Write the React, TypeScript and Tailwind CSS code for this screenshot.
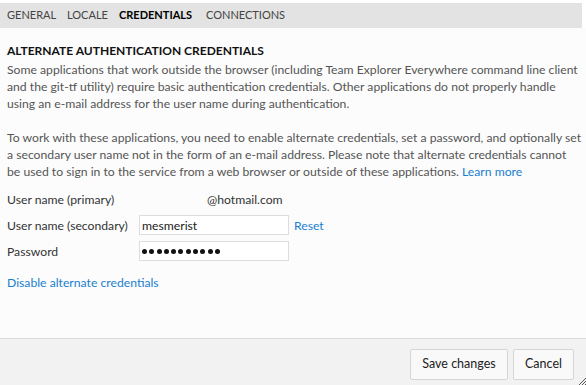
import React from "react";

export default function App() {
  const font = { fontFamily: 'Lato, "Open Sans", sans-serif' };
  const dots = Array.from({ length: 11 });
  return (
    <div className="w-[586px] h-[385px] bg-white flex flex-col overflow-hidden relative" style={font}>
      <div className="pt-[3px] w-[582px]">
        <div className="h-[25px] bg-[#e3e3e3] flex items-center pl-[7px] text-[11px] text-[#444] whitespace-nowrap">
          <span className="w-[60px]">GENERAL</span>
          <span className="w-[52px]">LOCALE</span>
          <span className="w-[87px] font-bold text-black">CREDENTIALS</span>
          <span>CONNECTIONS</span>
        </div>
      </div>
      <div className="flex-1 bg-[#fcfcfc] px-[7px] pt-[15px] text-[12.2px] leading-[17px] text-[#555] whitespace-nowrap">
        <div className="font-bold text-[12px] text-[#111] leading-[16px]">ALTERNATE AUTHENTICATION CREDENTIALS</div>
        <p className="mt-[2px]">
          Some applications that work outside the browser (including Team Explorer Everywhere command line client
          <br />
          and the git-tf utility) require basic authentication credentials. Other applications do not properly handle
          <br />
          using an e-mail address for the user name during authentication.
        </p>
        <p className="mt-[17px]">
          To work with these applications, you need to enable alternate credentials, set a password, and optionally set
          <br />
          a secondary user name not in the form of an e-mail address. Please note that alternate credentials cannot
          <br />
          be used to sign in to the service from a web browser or outside of these applications.{" "}
          <span className="text-[#1a7fd0]">Learn more</span>
        </p>
        <div className="mt-[9px] flex flex-col gap-[6px] text-[#333]">
          <div className="flex items-center h-[20px]">
            <span className="w-[132px]">User name (primary)</span>
            <span className="ml-[68px]">@hotmail.com</span>
          </div>
          <div className="flex items-center h-[20px]">
            <span className="w-[132px]">User name (secondary)</span>
            <div className="w-[150px] h-[20px] border border-[#ddd] bg-white flex items-center px-[2px] text-[#222]">mesmerist</div>
            <span className="ml-[5px] text-[#1a7fd0]">Reset</span>
          </div>
          <div className="flex items-center h-[20px]">
            <span className="w-[132px]">Password</span>
            <div className="w-[150px] h-[20px] border border-[#ddd] bg-white flex items-center px-[2px] gap-[2.3px]">
              {dots.map((_, i) => (
                <span key={i} className="w-[5px] h-[5px] rounded-full bg-[#111]" />
              ))}
            </div>
          </div>
        </div>
        <div className="mt-[13px] text-[#1a7fd0]">Disable alternate credentials</div>
      </div>
      <div className="h-[47px] border-t border-[#dadada] bg-[#f2f2f2] flex justify-end items-start pt-[10px] pr-[12px] gap-[5px] text-[12.5px] text-[#222]">
        <button className="h-[31px] w-[98px] border border-[#d5d5d5] bg-[#f9f9f9] rounded-[2px]">Save changes</button>
        <button className="h-[31px] w-[61px] border border-[#d5d5d5] bg-[#f9f9f9] rounded-[2px]">Cancel</button>
      </div>
      <svg className="absolute right-0 bottom-0" width="8" height="8" viewBox="0 0 8 8">
        <path d="M8 1 L1 8 M8 4 L4 8 M8 7 L7 8" stroke="#555" strokeWidth="1" />
      </svg>
    </div>
  );
}
